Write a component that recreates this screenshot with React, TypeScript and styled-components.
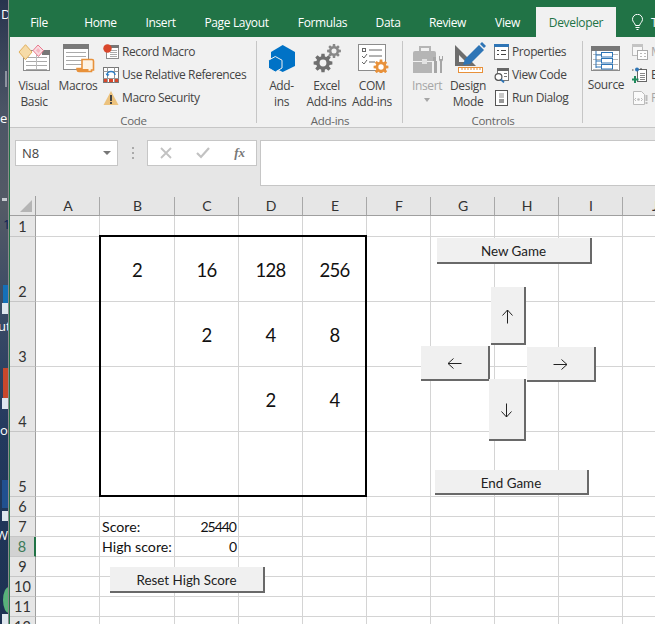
import React from "react";
import styled, { createGlobalStyle } from "styled-components";

const UI = `"Open Sans", "Noto Sans", sans-serif`;
const CELL = `Lato, "Noto Sans", sans-serif`;

const Global = createGlobalStyle`
  html, body { margin: 0; padding: 0; background: #fff; }
  #root { width: 655px; height: 624px; overflow: hidden; }
`;

const Page = styled.div`
  width: 655px; height: 624px; display: flex; overflow: hidden; font-family: ${UI};
`;
const Wallpaper = styled.svg`
  width: 9px; height: 624px; flex: none; display: block;
`;
const Excel = styled.div`
  flex: 1; min-width: 0; display: flex; flex-direction: column;
  border-left: 1px solid #217346; background: #fff;
`;

const TabBar = styled.div`
  height: 37px; flex: none; background: #217346; display: flex; align-items: flex-end; overflow: hidden;
`;
const Tab = styled.div<{ $w: number; $active?: boolean }>`
  width: ${p => p.$w}px; height: 30px; flex: none; display: flex; align-items: center; justify-content: center;
  font-size: 12px; letter-spacing: -0.35px;
  color: ${p => (p.$active ? "#217346" : "#fff")};
  background: ${p => (p.$active ? "#f1f1f1" : "transparent")};
`;
const TellMe = styled(Tab)`
  gap: 8px; justify-content: flex-start; padding-left: 16px; box-sizing: border-box;
`;

const Ribbon = styled.div`
  height: 90px; flex: none; display: flex; background: #f1f1f1; border-bottom: 1px solid #c6c6c6; overflow: hidden;
`;
const Group = styled.div<{ $w: number; $last?: boolean }>`
  width: ${p => p.$w}px; flex: none; display: flex; flex-direction: column; box-sizing: border-box;
  position: relative;
  &::after {
    content: ""; display: ${p => (p.$last ? "none" : "block")}; position: absolute;
    right: 0; top: 4px; bottom: 4px; width: 1px; background: #c6c6c6;
  }
`;
const GroupBody = styled.div<{ $pad: number }>`
  height: 78px; display: flex; padding: 4px 0 0 ${p => p.$pad}px; box-sizing: border-box;
`;
const GroupLabel = styled.div`
  height: 12px; line-height: 12px; text-align: center; font-size: 11.5px; letter-spacing: -0.3px; color: #666;
`;
const Large = styled.div<{ $w: number; $off?: boolean; $iconTop?: number }>`
  width: ${p => p.$w}px; flex: none; display: flex; flex-direction: column; align-items: center;
  font-size: 12px; line-height: 16px; letter-spacing: -0.35px; white-space: nowrap;
  color: ${p => (p.$off ? "#a6a6a6" : "#444")};
  svg { display: block; margin: ${p => p.$iconTop ?? 0}px 0 5px; flex: none; }
`;
const Caret = styled.span`
  margin-top: 4px; width: 0; height: 0; border: 3px solid transparent; border-top: 4px solid #a6a6a6; border-bottom: 0;
`;
const SmallCol = styled.div<{ $ml: number }>`
  margin-left: ${p => p.$ml}px; display: flex; flex-direction: column; margin-top: -1px;
`;
const Small = styled.div<{ $off?: boolean }>`
  height: 23px; flex: none; display: flex; align-items: center; gap: 3px; font-size: 12px; letter-spacing: -0.4px; white-space: nowrap;
  color: ${p => (p.$off ? "#a6a6a6" : "#444")};
  svg { flex: none; display: block; }
`;

const FormulaBar = styled.div`
  height: 68px; flex: none; box-sizing: border-box; background: #e6e6e6; display: flex; align-items: flex-start;
  padding: 12px 0 0 5px;
`;
const NameBox = styled.div`
  width: 103px; height: 26px; box-sizing: border-box; background: #fff; border: 1px solid #c6c6c6;
  display: flex; align-items: center; justify-content: space-between; padding: 0 6px;
  font-size: 13px; color: #444;
`;
const DownCaret = styled.span`
  width: 0; height: 0; border: 4px solid transparent; border-top: 4px solid #777; border-bottom: 0;
`;
const Grip = styled.div`
  width: 2px; height: 12px; margin: 7px 13px 0 14px; flex: none;
  background: repeating-linear-gradient(#aaa 0 2px, transparent 2px 5px);
`;
const FnBox = styled.div`
  width: 110px; height: 26px; flex: none; box-sizing: border-box; background: #fff; border: 1px solid #c6c6c6;
  display: flex; align-items: center; justify-content: space-between; padding: 0 11px 0 12px;
`;
const Fx = styled.span`
  font-family: "Liberation Serif", serif; font-style: italic; font-weight: 700; font-size: 13px; color: #777;
`;
const FormulaInput = styled.div`
  flex: 1; margin-left: 3px; height: 46px; background: #fff; border: 1px solid #c6c6c6; border-right: 0; box-sizing: border-box;
`;

const Sheet = styled.div`
  position: relative; flex: 1; min-height: 0; overflow: hidden;
  display: grid; align-content: start; font-family: ${CELL};
  grid-template-columns: 26px 64px 75px repeat(8, 64px);
  grid-template-rows: 20px 21px repeat(4, 65px) repeat(7, 20px);
`;
const Corner = styled.div`
  background: #e6e6e6; border-right: 1px solid #9f9f9f; border-bottom: 1px solid #9f9f9f; position: relative;
  &::after {
    content: ""; position: absolute; right: 3px; bottom: 3px; width: 12px; height: 12px;
    background: #b5b5b5; clip-path: polygon(100% 0, 100% 100%, 0 100%);
  }
`;
const ColHead = styled.div`
  background: #e6e6e6; border-bottom: 1px solid #9f9f9f; position: relative; box-sizing: border-box;
  display: flex; align-items: flex-end; justify-content: center; font-size: 14px; line-height: 18px; color: #333;
  &::after { content: ""; position: absolute; right: 0; top: 1px; bottom: 0; width: 1px; background: #a8a8a8; }
`;
const RowHead = styled.div<{ $sel?: boolean }>`
  box-sizing: border-box; display: flex; align-items: flex-end; justify-content: center;
  font-size: 14.5px; line-height: 18px;
  background: ${p => (p.$sel ? "#d2d2d2" : "#e6e6e6")};
  color: ${p => (p.$sel ? "#3d7a58" : "#333")};
  border-bottom: 1px solid #c6c6c6;
  border-right: ${p => (p.$sel ? "2px solid #217346" : "1px solid #9f9f9f")};
`;
const Cell = styled.div<{ $big?: boolean; $right?: boolean }>`
  box-sizing: border-box; border-right: 1px solid #d4d4d4; border-bottom: 1px solid #d4d4d4;
  display: flex; white-space: nowrap; color: #111; min-width: 0;
  align-items: ${p => (p.$big ? "center" : "flex-end")};
  justify-content: ${p => (p.$big ? "center" : p.$right ? "flex-end" : "flex-start")};
  font-size: ${p => (p.$big ? "18.5px" : p.$right ? "14px" : "14.2px")};
  letter-spacing: ${p => (p.$big ? "-0.8px" : p.$right ? "-1px" : "0")};
  line-height: ${p => (p.$big ? "22px" : "18px")};
  padding: ${p => (p.$big ? "1px 0 0" : "0 2px")};
`;
const Board = styled.div`
  position: absolute; left: 89px; top: 39px; width: 268px; height: 262px; box-sizing: border-box;
  border: 2px solid #000; pointer-events: none;
`;
const Control = styled.div<{ $x: number; $y: number; $w: number; $h: number }>`
  position: absolute; left: ${p => p.$x}px; top: ${p => p.$y}px; width: ${p => p.$w}px; height: ${p => p.$h}px;
  box-sizing: border-box; background: #f0f0f0; border-right: 2px solid #696969; border-bottom: 2px solid #696969;
  padding-top: 2px;
  display: flex; align-items: center; justify-content: center; color: #222; font-size: 13.4px;
  svg { display: block; }
`;

const Gear = ({ cx, cy, r, fill, hole = "#f1f1f1" }: { cx: number; cy: number; r: number; fill: string; hole?: string }) => {
  const pts: string[] = [];
  for (let i = 0; i < 8; i++) {
    const a = (i * Math.PI) / 4;
    const d = 0.28;
    [[a - d, r * 0.72], [a - d * 0.6, r], [a + d * 0.6, r], [a + d, r * 0.72]].forEach(([t, R]) =>
      pts.push(`${(cx + R * Math.cos(t)).toFixed(2)},${(cy + R * Math.sin(t)).toFixed(2)}`)
    );
  }
  return (
    <>
      <polygon points={pts.join(" ")} fill={fill} />
      <circle cx={cx} cy={cy} r={r * 0.36} fill={hole} />
    </>
  );
};

const Lines = ({ x, y, w, n, step = 4, c = "#aaa" }: { x: number; y: number; w: number; n: number; step?: number; c?: string }) => (
  <>
    {Array.from({ length: n }, (_, i) => (
      <line key={i} x1={x} x2={x + w} y1={y + i * step + 0.5} y2={y + i * step + 0.5} stroke={c} />
    ))}
  </>
);

const VisualBasicIcon = () => (
  <svg width="36" height="32" viewBox="0 0 36 32">
    <rect x="7.500" y="9.500" width="26" height="20" fill="#fff" stroke="#8c8c8c" />
    <rect x="26" y="9" width="8" height="5" fill="#777" />
    <Lines x={10} y={16} w={21} n={4} />
    <line x1="20.500" x2="20.500" y1="14" y2="28" stroke="#bbb" />
    <polygon points="9.500,3.700 16,11 9.500,18.700 3,11" fill="#f6dba8" stroke="#e2b05c" />
    <polygon points="22,4 27.500,9.500 22.500,15.500 17,9.500" fill="#fadbe0" stroke="#e8798e" />
    <polygon points="22,7 24.500,9.500 22.500,12 20,9.500" fill="#f5b6c2" />
  </svg>
);
const MacrosIcon = () => (
  <svg width="36" height="32" viewBox="0 0 36 32">
    <rect x="3.500" y="3.500" width="25" height="25" fill="#fff" stroke="#8c8c8c" />
    <rect x="3" y="3" width="26" height="5" fill="#7a7a7a" />
    <Lines x={6} y={11} w={20} n={4} />
    <path d="M22 18.500h10a1.500 1.500 0 0 1 1.500 1.500v9h-2v1.500H19a3 3 0 0 1-2-3h5z" fill="#fdf2e3" stroke="#e8913a" strokeWidth="1.600" />
    <rect x="17.500" y="28" width="11" height="3" fill="#e8913a" />
  </svg>
);
const RecordIcon = () => (
  <svg width="16" height="16" viewBox="0 0 16 16">
    <rect x="3.500" y="1.500" width="12" height="13" fill="#fff" stroke="#8c8c8c" />
    <rect x="7" y="1" width="9" height="3" fill="#777" />
    <Lines x={7} y={6} w={7} n={4} step={2} />
    <circle cx="4.500" cy="4.500" r="4.200" fill="#d9472b" />
  </svg>
);
const RelativeIcon = () => (
  <svg width="16" height="16" viewBox="0 0 16 16">
    <rect x="0.500" y="0.500" width="15" height="15" fill="#fff" stroke="#777" />
    <path d="M.5 4.500h15M.5 11.500h15M4.500 .5v15M11.500 .5v15" stroke="#999" fill="none" />
    <path d="M4 8a4 3.500 0 0 1 8 0" fill="none" stroke="#2d7dc4" strokeWidth="1.500" />
    <path d="M2.500 6.500l2 3 2-2z" fill="#2d7dc4" />
    <rect x="1" y="12" width="3" height="3" fill="#d9472b" />
    <rect x="12" y="12" width="3" height="3" fill="#d9472b" />
    <rect x="6" y="12" width="4" height="3" fill="#d9472b" />
  </svg>
);
const WarnIcon = () => (
  <svg width="16" height="16" viewBox="0 0 16 16">
    <polygon points="8,1 15.500,15 0.500,15" fill="#ecc27d" />
    <rect x="7" y="5" width="2" height="6" fill="#444" />
    <rect x="7" y="12" width="2" height="2" fill="#444" />
  </svg>
);
const AddInsIcon = () => (
  <svg width="36" height="32" viewBox="0 0 36 32">
    <polygon points="18.700,4 31,11 31,25 18.700,31 7,25 7,11" fill="#0072c6" />
    <polygon points="11.300,15.500 18,19.200 18,27 11.300,31 4.500,27 4.500,19.200" fill="#0072c6" stroke="#f1f1f1" />
  </svg>
);
const ExcelAddInsIcon = () => (
  <svg width="36" height="32" viewBox="0 0 36 32">
    <Gear cx={14} cy={22} r={9.500} fill="#6f6f6f" />
    <Gear cx={25} cy={10} r={7} fill="#888" />
  </svg>
);
const ComIcon = () => (
  <svg width="36" height="32" viewBox="0 0 36 32">
    <rect x="4.500" y="3.500" width="27" height="26" fill="#fff" stroke="#8c8c8c" />
    <rect x="8.500" y="7.500" width="3" height="3" fill="none" stroke="#666" />
    <path d="M8 15l2 2 3-4M8 21l2 2 3-4" fill="none" stroke="#666" />
    <path d="M15 9h13M15 15h13M15 21h6" stroke="#666" />
    <Gear cx={27} cy={26} r={7.500} fill="#e8913a" hole="#fff" />
  </svg>
);
const InsertIcon = () => (
  <svg width="36" height="32" viewBox="0 0 36 32">
    <path d="M11 10V6h10v4" fill="none" stroke="#b5b5b5" strokeWidth="2" />
    <path d="M4 12a2 2 0 0 1 2-2h19a2 2 0 0 1 2 2v8H4z" fill="#b5b5b5" />
    <rect x="4" y="21" width="19" height="11" fill="#b5b5b5" />
    <rect x="13" y="18" width="5" height="5" fill="#e2e2e2" />
    <path d="M24 16h3v4h1v12h-3V20h-1zM30 15v4l1 1.500V32h2V20.500l1-1.500v-4h-1v3h-2v-3z" fill="#a6a6a6" />
  </svg>
);
const DesignIcon = () => (
  <svg width="36" height="32" viewBox="0 0 36 32">
    <path d="M5 4l21 21H5zM9 14v7h7z" fill="#6d6d6d" fillRule="evenodd" />
    <path d="M13 24l2-6L29 4l5 5-14 14z" fill="#2e75b6" />
    <path d="M30 3l2-2 4 4-2 2z" fill="#2e75b6" />
    <rect x="8.500" y="26.500" width="24" height="5" fill="#fff" stroke="#e8913a" />
    <path d="M12 27v2M15 27v2M18 27v2M21 27v2M24 27v2M27 27v2M30 27v2" stroke="#e8913a" />
  </svg>
);
const PropsIcon = () => (
  <svg width="15" height="16" viewBox="0 0 15 16">
    <rect x="0.500" y="0.500" width="14" height="15" fill="#fff" stroke="#777" />
    <rect x="0" y="0" width="15" height="3" fill="#2e75b6" />
    <path d="M3 6.500h2M3 10.500h2M7 6.500h5M7 10.500h5" stroke="#444" />
  </svg>
);
const ViewCodeIcon = () => (
  <svg width="15" height="16" viewBox="0 0 15 16">
    <rect x="3.500" y="1.500" width="11" height="12" fill="#fff" stroke="#777" />
    <rect x="3" y="1" width="12" height="3" fill="#666" />
    <path d="M10 6.500h3M10 9.500h3" stroke="#777" />
    <circle cx="4.500" cy="10" r="3.400" fill="#fff" stroke="#555" strokeWidth="1.200" />
    <path d="M7 12.500l3 3" stroke="#2e75b6" strokeWidth="1.800" />
  </svg>
);
const RunDialogIcon = () => (
  <svg width="15" height="16" viewBox="0 0 15 16">
    <rect x="1.500" y="0.500" width="12" height="15" fill="#fff" stroke="#555" />
    <rect x="5" y="3" width="5" height="5" fill="#c8c8c8" />
    <rect x="5" y="9" width="5" height="4" fill="#999" />
  </svg>
);
const SourceIcon = () => (
  <svg width="30" height="26" viewBox="0 0 30 26">
    <rect x="0.500" y="0.500" width="28" height="24" fill="#fff" stroke="#8c8c8c" />
    <rect x="0" y="0" width="29" height="5" fill="#777" />
    <Lines x={2} y={8} w={25} n={4} step={5} c="#bbb" />
    <path d="M5 5v17M5 9h5M5 15h5M5 21h5" stroke="#2e75b6" fill="none" />
    <rect x="10.500" y="6.500" width="11" height="4.500" fill="#fff" stroke="#2e75b6" />
    <rect x="10.500" y="12.500" width="11" height="4.500" fill="#fff" stroke="#2e75b6" />
    <rect x="10.500" y="18.500" width="11" height="4.500" fill="#fff" stroke="#2e75b6" />
  </svg>
);
const MapIcon = () => (
  <svg width="16" height="16" viewBox="0 0 16 16">
    <rect x="0.500" y="0.500" width="10" height="11" fill="#f8f8f8" stroke="#bbb" />
    <rect x="0" y="0" width="11" height="3" fill="#c4c4c4" />
    <rect x="5.500" y="6.500" width="10" height="9" fill="#fff" stroke="#aaa" />
    <path d="M8 9.500h2M12 9.500h2M8 12.500h2M12 12.500h2" stroke="#bbb" />
  </svg>
);
const ExportIcon = () => (
  <svg width="16" height="16" viewBox="0 0 16 16">
    <rect x="5.500" y="2.500" width="9" height="12" fill="#fff" stroke="#666" />
    <path d="M8 6.500h5M8 8.500h5M8 10.500h5M8 12.500h5" stroke="#888" />
    <circle cx="5" cy="2.500" r="2" fill="#2e75b6" />
    <path d="M0 3h1.500M9 1v2" stroke="#444" />
    <path d="M3 9v7M0 12.500h6.500" stroke="#1f8a5b" strokeWidth="2" />
  </svg>
);
const RefreshIcon = () => (
  <svg width="16" height="16" viewBox="0 0 16 16">
    <path d="M1.500 1.500h8l3 3v10h-11z" fill="#fafafa" stroke="#bbb" />
    <path d="M4 8l-1.500 1.500L4 11M9 8l1.500 1.500L9 11" fill="none" stroke="#bbb" />
    <circle cx="6.500" cy="9.500" r="1.300" fill="#bbb" />
    <rect x="13.500" y="5" width="2" height="6" fill="#bbb" />
    <rect x="13.500" y="12" width="2" height="2" fill="#bbb" />
  </svg>
);
const Bulb = () => (
  <svg width="11" height="16" viewBox="0 0 11 16" fill="none" stroke="#fff">
    <path d="M3.500 11.500C3 9 .5 8 .5 5.300a5 5 0 0 1 10 0C10.500 8 8 9 7.500 11.500z" />
    <path d="M3.500 13.500h4M4.500 15.500h2" />
  </svg>
);
const CrossIcon = () => (
  <svg width="12" height="12" viewBox="0 0 12 12">
    <path d="M1 1l10 10M11 1L1 11" stroke="#c2c2c2" strokeWidth="1.800" />
  </svg>
);
const CheckIcon = () => (
  <svg width="14" height="12" viewBox="0 0 14 12">
    <path d="M1 6l4 4 8-9" fill="none" stroke="#c2c2c2" strokeWidth="2.200" />
  </svg>
);
const Arrow = ({ dir }: { dir: "up" | "down" | "left" | "right" }) => {
  const rot = { up: 0, right: 90, down: 180, left: 270 }[dir];
  return (
    <svg width="15" height="15" viewBox="0 0 15 15" style={{ transform: `rotate(${rot}deg)` }}>
      <path d="M7.500 14.500V1M2.500 6.500l5-5.500 5 5.500" fill="none" stroke="#222" strokeWidth="1" />
    </svg>
  );
};

const columns = ["A", "B", "C", "D", "E", "F", "G", "H", "I", "J"];
const rows = [1, 2, 3, 4, 5, 6, 7, 8, 9, 10, 11, 12];
const values: Record<string, string> = {
  B2: "2", C2: "16", D2: "128", E2: "256",
  C3: "2", D3: "4", E3: "8",
  D4: "2", E4: "4",
  B7: "Score:", C7: "25440",
  B8: "High score:", C8: "0",
};

const tabs: [string, number][] = [
  ["File", 58], ["Home", 65], ["Insert", 55], ["Page Layout", 97], ["Formulas", 75],
  ["Data", 56], ["Review", 63], ["View", 57],
];

export default function App() {
  return (
    <Page>
      <Global />
      <Wallpaper viewBox="0 0 9 624">
        <defs>
          <linearGradient id="wp" x1="0" x2="0" y1="0" y2="1">
            <stop offset="0" stopColor="#28344e" />
            <stop offset="0.18" stopColor="#4c5566" />
            <stop offset="0.33" stopColor="#545a66" />
            <stop offset="0.5" stopColor="#3a4a66" />
            <stop offset="0.7" stopColor="#23395e" />
            <stop offset="1" stopColor="#1d3152" />
          </linearGradient>
        </defs>
        <rect width="8" height="624" fill="url(#wp)" />
        <rect x="3" y="285" width="5" height="20" fill="#1570b8" />
        <rect x="3" y="368" width="5" height="30" fill="#c8482c" />
        <rect x="2" y="480" width="6" height="28" fill="#21508f" />
        <rect x="2" y="303" width="6" height="11" fill="#dfe6ee" />
        <rect x="2" y="398" width="6" height="11" fill="#dfe6ee" />
        <rect x="2" y="511" width="6" height="10" fill="#dfe6ee" />
        <rect x="2" y="614" width="6" height="10" fill="#dfe6ee" />
        <ellipse cx="9" cy="600" rx="6" ry="13" fill="#58b27a" />
        <rect x="5" y="71" width="2" height="16" fill="#8d93a0" />
        <rect x="2" y="198" width="5" height="3" fill="#c8ccd2" />
        <g fontFamily="Open Sans, sans-serif" fontSize="13" fill="#fff">
          <text x="1" y="19">D</text>
          <text x="0" y="123">e</text>
          <text x="-2" y="331">ut</text>
          <text x="0" y="435">o</text>
          <text x="-4" y="540">W</text>
          <text x="3" y="229" fill="#0e1f55">1</text>
        </g>
        <rect x="8" width="1" height="624" fill="#8a8a8a" />
      </Wallpaper>
      <Excel>
        <TabBar>
          {tabs.map(([t, w]) => (
            <Tab key={t} $w={w}>{t}</Tab>
          ))}
          <Tab $w={80} $active>Developer</Tab>
          <TellMe $w={60}><Bulb />T</TellMe>
        </TabBar>
        <Ribbon>
          <Group $w={247}>
            <GroupBody $pad={2}>
              <Large $w={44}><VisualBasicIcon /><span>Visual</span><span>Basic</span></Large>
              <Large $w={44}><MacrosIcon /><span>Macros</span></Large>
              <SmallCol $ml={3}>
                <Small><RecordIcon />Record Macro</Small>
                <Small><RelativeIcon />Use Relative References</Small>
                <Small><WarnIcon />Macro Security</Small>
              </SmallCol>
            </GroupBody>
            <GroupLabel>Code</GroupLabel>
          </Group>
          <Group $w={146}>
            <GroupBody $pad={2}>
              <Large $w={45}><AddInsIcon /><span>Add-</span><span>ins</span></Large>
              <Large $w={45}><ExcelAddInsIcon /><span>Excel</span><span>Add-ins</span></Large>
              <Large $w={46}><ComIcon /><span>COM</span><span>Add-ins</span></Large>
            </GroupBody>
            <GroupLabel>Add-ins</GroupLabel>
          </Group>
          <Group $w={180}>
            <GroupBody $pad={2}>
              <Large $w={44} $off><InsertIcon /><span>Insert</span><Caret /></Large>
              <Large $w={38}><DesignIcon /><span>Design</span><span>Mode</span></Large>
              <SmallCol $ml={7}>
                <Small><PropsIcon />Properties</Small>
                <Small><ViewCodeIcon />View Code</Small>
                <Small><RunDialogIcon />Run Dialog</Small>
              </SmallCol>
            </GroupBody>
            <GroupLabel>Controls</GroupLabel>
          </Group>
          <Group $w={80} $last>
            <GroupBody $pad={0}>
              <Large $w={46} $iconTop={5}><SourceIcon /><span>Source</span></Large>
              <SmallCol $ml={3}>
                <Small $off><MapIcon />Map Properties</Small>
                <Small><ExportIcon />Expansion Packs</Small>
                <Small $off><RefreshIcon />Refresh Data</Small>
              </SmallCol>
            </GroupBody>
          </Group>
        </Ribbon>
        <FormulaBar>
          <NameBox>N8<DownCaret /></NameBox>
          <Grip />
          <FnBox><CrossIcon /><CheckIcon /><Fx>fx</Fx></FnBox>
          <FormulaInput />
        </FormulaBar>
        <Sheet>
          <Corner />
          {columns.map(c => <ColHead key={c}>{c}</ColHead>)}
          {rows.map(r => (
            <React.Fragment key={r}>
              <RowHead $sel={r === 8}>{r}</RowHead>
              {columns.map(c => (
                <Cell key={c} $big={r >= 2 && r <= 5} $right={c === "C" && r >= 7}>
                  {values[c + r]}
                </Cell>
              ))}
            </React.Fragment>
          ))}
          <Board />
          <Control $x={427} $y={42} $w={155} $h={26}>New Game</Control>
          <Control $x={481} $y={91} $w={35} $h={58}><Arrow dir="up" /></Control>
          <Control $x={411} $y={150} $w={69} $h={35}><Arrow dir="left" /></Control>
          <Control $x={517} $y={151} $w={69} $h={35}><Arrow dir="right" /></Control>
          <Control $x={479} $y={183} $w={37} $h={62}><Arrow dir="down" /></Control>
          <Control $x={425} $y={274} $w={154} $h={25}>End Game</Control>
          <Control $x={100} $y={371} $w={155} $h={26}>Reset High Score</Control>
        </Sheet>
      </Excel>
    </Page>
  );
}
